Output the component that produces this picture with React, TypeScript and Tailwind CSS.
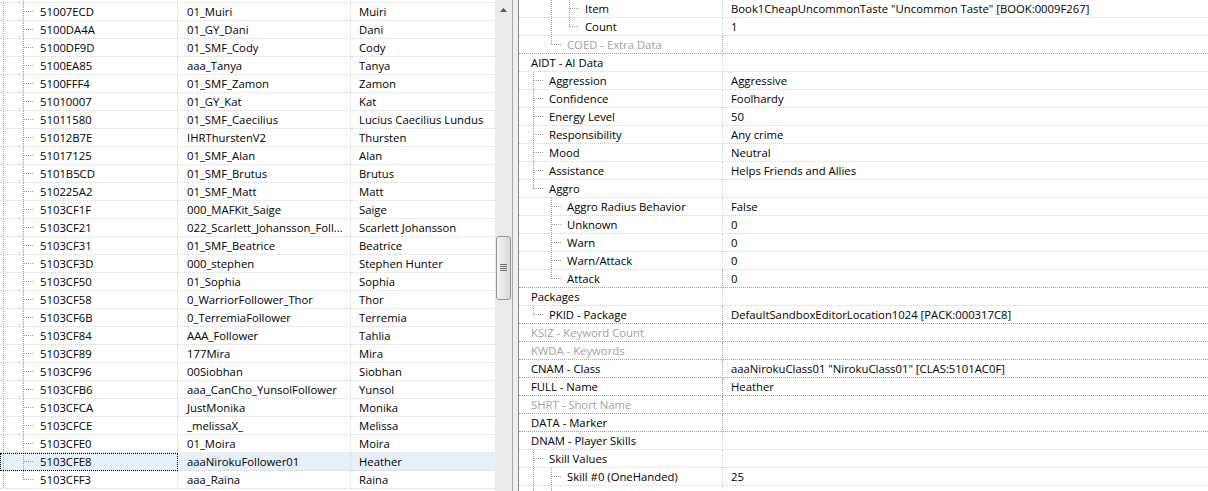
import React from "react";

type LRow = { id: string; edid: string; name: string; last?: boolean; selected?: boolean };

const leftRows: LRow[] = [
  { id: "", edid: "", name: "" },
  { id: "51007ECD", edid: "01_Muiri", name: "Muiri" },
  { id: "5100DA4A", edid: "01_GY_Dani", name: "Dani" },
  { id: "5100DF9D", edid: "01_SMF_Cody", name: "Cody" },
  { id: "5100EA85", edid: "aaa_Tanya", name: "Tanya" },
  { id: "5100FFF4", edid: "01_SMF_Zamon", name: "Zamon" },
  { id: "51010007", edid: "01_GY_Kat", name: "Kat" },
  { id: "51011580", edid: "01_SMF_Caecilius", name: "Lucius Caecilius Lundus" },
  { id: "51012B7E", edid: "IHRThurstenV2", name: "Thursten" },
  { id: "51017125", edid: "01_SMF_Alan", name: "Alan" },
  { id: "5101B5CD", edid: "01_SMF_Brutus", name: "Brutus" },
  { id: "510225A2", edid: "01_SMF_Matt", name: "Matt" },
  { id: "5103CF1F", edid: "000_MAFKit_Saige", name: "Saige" },
  { id: "5103CF21", edid: "022_Scarlett_Johansson_Foll...", name: "Scarlett Johansson" },
  { id: "5103CF31", edid: "01_SMF_Beatrice", name: "Beatrice" },
  { id: "5103CF3D", edid: "000_stephen", name: "Stephen Hunter" },
  { id: "5103CF50", edid: "01_Sophia", name: "Sophia" },
  { id: "5103CF58", edid: "0_WarriorFollower_Thor", name: "Thor" },
  { id: "5103CF6B", edid: "0_TerremiaFollower", name: "Terremia" },
  { id: "5103CF84", edid: "AAA_Follower", name: "Tahlia" },
  { id: "5103CF89", edid: "177Mira", name: "Mira" },
  { id: "5103CF96", edid: "00Siobhan", name: "Siobhan" },
  { id: "5103CFB6", edid: "aaa_CanCho_YunsolFollower", name: "Yunsol" },
  { id: "5103CFCA", edid: "JustMonika", name: "Monika" },
  { id: "5103CFCE", edid: "_melissaX_", name: "Melissa" },
  { id: "5103CFE0", edid: "01_Moira", name: "Moira" },
  { id: "5103CFE8", edid: "aaaNirokuFollower01", name: "Heather", selected: true },
  { id: "5103CFF3", edid: "aaa_Raina", name: "Raina", last: true },
];

type RRow = {
  label: string;
  value?: string;
  level: number;
  last?: boolean;
  cont?: number[];
  gray?: boolean;
};

const rightRows: RRow[] = [
  { label: "Item", value: 'Book1CheapUncommonTaste "Uncommon Taste" [BOOK:0009F267]', level: 3, cont: [2] },
  { label: "Count", value: "1", level: 3, last: true, cont: [2] },
  { label: "COED - Extra Data", level: 2, last: true, gray: true },
  { label: "AIDT - AI Data", level: 0 },
  { label: "Aggression", value: "Aggressive", level: 1 },
  { label: "Confidence", value: "Foolhardy", level: 1 },
  { label: "Energy Level", value: "50", level: 1 },
  { label: "Responsibility", value: "Any crime", level: 1 },
  { label: "Mood", value: "Neutral", level: 1 },
  { label: "Assistance", value: "Helps Friends and Allies", level: 1 },
  { label: "Aggro", level: 1, last: true },
  { label: "Aggro Radius Behavior", value: "False", level: 2 },
  { label: "Unknown", value: "0", level: 2 },
  { label: "Warn", value: "0", level: 2 },
  { label: "Warn/Attack", value: "0", level: 2 },
  { label: "Attack", value: "0", level: 2, last: true },
  { label: "Packages", level: 0 },
  { label: "PKID - Package", value: "DefaultSandboxEditorLocation1024 [PACK:000317C8]", level: 1, last: true },
  { label: "KSIZ - Keyword Count", level: 0, gray: true },
  { label: "KWDA - Keywords", level: 0, gray: true },
  { label: "CNAM - Class", value: 'aaaNirokuClass01 "NirokuClass01" [CLAS:5101AC0F]', level: 0 },
  { label: "FULL - Name", value: "Heather", level: 0 },
  { label: "SHRT - Short Name", level: 0, gray: true },
  { label: "DATA - Marker", level: 0 },
  { label: "DNAM - Player Skills", level: 0 },
  { label: "Skill Values", level: 1 },
  { label: "Skill #0 (OneHanded)", value: "25", level: 2, cont: [1] },
  { label: "Skill #1 (TwoHanded)", value: "20", level: 2, cont: [1] },
];

const LINE = "#a0a0a0";

function LeftTree({ last }: { last?: boolean }) {
  return (
    <svg width="40" height="17" className="shrink-0 overflow-visible" shapeRendering="crispEdges">
      <line x1="3.5" y1="0" x2="3.5" y2="18" stroke={LINE} strokeDasharray="1 1" />
      <line x1="23.5" y1="0" x2="23.5" y2={last ? 9 : 18} stroke={LINE} strokeDasharray="1 1" />
      <line x1="24" y1="8.5" x2="34" y2="8.5" stroke={LINE} strokeDasharray="1 1" />
    </svg>
  );
}

function RightTree({ level, last, cont }: { level: number; last?: boolean; cont?: number[] }) {
  const w = 12 + 18 * level;
  const vx = (a: number) => 14 + 18 * (a - 1) + 0.5;
  return (
    <svg width={w} height="17" className="shrink-0 overflow-visible" shapeRendering="crispEdges">
      {(cont || []).map((a) => (
        <line key={a} x1={vx(a)} y1="0" x2={vx(a)} y2="18" stroke={LINE} strokeDasharray="1 1" />
      ))}
      {level > 0 && (
        <>
          <line x1={vx(level)} y1="0" x2={vx(level)} y2={last ? 9 : 18} stroke={LINE} strokeDasharray="1 1" />
          <line x1={vx(level) + 0.5} y1="8.5" x2={vx(level) + 9.5} y2="8.5" stroke={LINE} strokeDasharray="1 1" />
        </>
      )}
    </svg>
  );
}

function LeftPane() {
  return (
    <div className="flex h-full w-[513px] shrink-0 border-r border-[#a9a9a9]">
      <div className="h-full w-[495px] shrink-0 overflow-hidden">
        <div className="-mt-[15px]">
          {leftRows.map((r, i) => (
            <div key={i} className={`flex h-[18px] ${r.selected ? "bg-[#e5f0fb]" : ""}`}>
              <div
                className={`flex w-[178px] shrink-0 items-center border-b border-r border-dotted border-[#d8d8d8] ${
                  r.selected ? "outline-1 outline-dotted outline-black -outline-offset-1" : ""
                }`}
              >
                <LeftTree last={r.last} />
                <span className="whitespace-nowrap">{r.id}</span>
              </div>
              <div className="flex w-[173px] shrink-0 items-center overflow-hidden border-b border-r border-dotted border-[#d8d8d8] pl-[9px]">
                <span className="whitespace-nowrap">{r.edid}</span>
              </div>
              <div className="flex flex-1 items-center overflow-hidden border-b border-dotted border-[#d8d8d8] pl-[8px]">
                <span className="whitespace-nowrap">{r.name}</span>
              </div>
            </div>
          ))}
        </div>
      </div>
      <div className="flex h-full w-[17px] shrink-0 flex-col bg-[#ebebeb]">
        <div className="flex h-[20px] items-center justify-center">
          <svg width="7" height="4" viewBox="0 0 7 4">
            <path d="M3.5 0 L7 4 L0 4 Z" fill="#5a5a5a" />
          </svg>
        </div>
        <div className="mx-[1px] mt-[216px] flex h-[64px] items-center justify-center rounded-[3px] border border-[#979797] bg-linear-to-r from-[#f4f4f4] to-[#dadada]">
          <svg width="7" height="8" viewBox="0 0 7 8" shapeRendering="crispEdges">
            <line x1="0" y1="0.5" x2="7" y2="0.5" stroke="#6e6e6e" />
            <line x1="0" y1="2.5" x2="7" y2="2.5" stroke="#6e6e6e" />
            <line x1="0" y1="4.5" x2="7" y2="4.5" stroke="#6e6e6e" />
            <line x1="0" y1="6.5" x2="7" y2="6.5" stroke="#6e6e6e" />
          </svg>
        </div>
      </div>
    </div>
  );
}

function RightPane() {
  return (
    <div className="h-full flex-1 overflow-hidden border-l border-[#8a8a8a] bg-white">
      {rightRows.map((r, i) => {
        const next = rightRows[i + 1];
        const dark = next && next.level === 0;
        const bc = dark ? "border-[#a4a4a4]" : "border-[#d4d4d4]";
        return (
          <div key={i} className="flex h-[18px]">
            <div className={`flex w-[204px] shrink-0 items-center border-b border-r border-dotted ${bc} ${r.gray ? "text-[#a2a2a2]" : ""}`}>
              <RightTree level={r.level} last={r.last} cont={r.cont} />
              <span className="whitespace-nowrap">{r.label}</span>
            </div>
            <div className={`flex flex-1 items-center border-b border-dotted ${bc} pl-[8px]`}>
              <span className="whitespace-nowrap">{r.value || ""}</span>
            </div>
          </div>
        );
      })}
    </div>
  );
}

export default function App() {
  return (
    <div className="flex h-[491px] w-[1208px] overflow-hidden bg-white font-['Open_Sans',sans-serif] text-[11.3px] leading-[17px] text-black">
      <LeftPane />
      <div className="h-full w-[5px] shrink-0 bg-[#f0f0f0]" />
      <RightPane />
    </div>
  );
}
